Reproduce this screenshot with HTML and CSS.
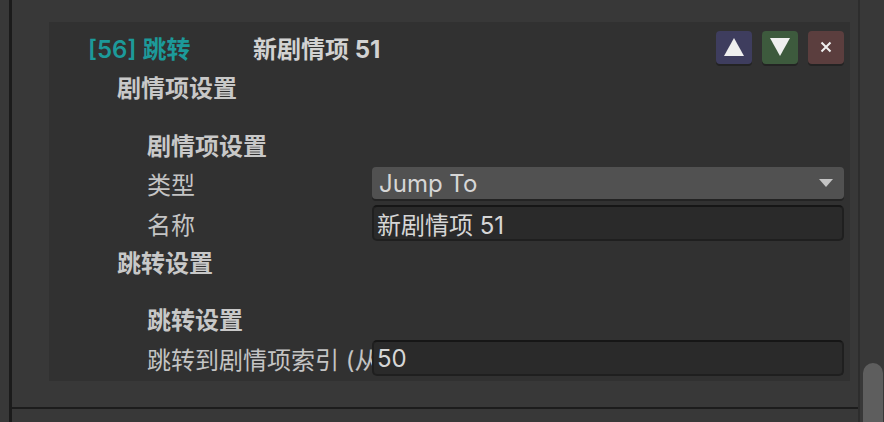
FILE: index.html
```html
<!DOCTYPE html>
<html lang="zh">
<head>
<meta charset="utf-8">
<link rel="stylesheet" href="styles.css">
</head>
<body>
  <div class="gutter"></div>
  <div class="vline"></div>
  <div class="main">
    <div class="content">
      <div class="panel">
        <div class="header">
          <span class="index">[56] 跳转</span>
          <span class="title">新剧情项 51</span>
          <div class="buttons">
            <button class="btn btn-up" aria-label="上移">
              <svg width="20" height="18" viewBox="0 0 20 18"><polygon points="10,0 20,18 0,18" fill="#efefef"/></svg>
            </button>
            <button class="btn btn-down" aria-label="下移">
              <svg width="20" height="18" viewBox="0 0 20 18"><polygon points="0,0 20,0 10,18" fill="#efefef"/></svg>
            </button>
            <button class="btn btn-close" aria-label="删除">
              <svg width="12" height="12" viewBox="0 0 12 12"><path d="M1.5 1.5 L10.5 10.5 M10.5 1.5 L1.5 10.5" stroke="#efefef" stroke-width="2"/></svg>
            </button>
          </div>
        </div>

        <div class="section-title">剧情项设置</div>
        <div class="group group-first">
          <div class="group-title">剧情项设置</div>
          <div class="row row-dropdown">
            <div class="label">类型</div>
            <div class="dropdown">
              <span>Jump To</span>
              <svg width="14" height="8" viewBox="0 0 14 8"><polygon points="0,0 14,0 7,8" fill="#c4c4c4"/></svg>
            </div>
          </div>
          <div class="row row-field">
            <div class="label">名称</div>
            <div class="field">新剧情项 51</div>
          </div>
        </div>

        <div class="section-title section-second">跳转设置</div>
        <div class="group group-second">
          <div class="group-title">跳转设置</div>
          <div class="row row-last">
            <div class="label">跳转到剧情项索引 (从</div>
            <div class="field">50</div>
          </div>
        </div>
      </div>
    </div>
    <div class="divider"></div>
  </div>
  <div class="sep"></div>
  <div class="scroll">
    <div class="thumb"></div>
  </div>
</body>
</html>
```

FILE: styles.css
```css
html, body {
  margin: 0;
  padding: 0;
}

body {
  width: 884px;
  height: 422px;
  overflow: hidden;
  display: flex;
  background: #383838;
  font-family: Inter, "Noto Sans CJK SC", sans-serif;
  font-size: 24px;
  color: #c4c4c4;
}

.gutter {
  width: 9px;
  flex: none;
}

.vline {
  width: 3px;
  flex: none;
  background: #1b1b1b;
}

.main {
  width: 846px;
  flex: none;
  display: flex;
  flex-direction: column;
}

.content {
  padding: 22px 8px 0 37px;
}

.panel {
  width: 801px;
  background: #313131;
  padding: 8px 6px 5px 0;
  box-sizing: border-box;
  display: flex;
  flex-direction: column;
}

.header {
  height: 34px;
  display: flex;
  align-items: center;
}

.index {
  width: 165px;
  padding-left: 39px;
  color: #1c9a9a;
  font-weight: 600;
  white-space: nowrap;
}

.title {
  color: #d2d2d2;
  font-weight: 700;
  white-space: nowrap;
}

.buttons {
  margin-left: auto;
  display: flex;
  gap: 10px;
}

.btn {
  width: 36px;
  height: 33px;
  border: none;
  border-radius: 4px;
  padding: 0;
  display: flex;
  align-items: center;
  justify-content: center;
  box-shadow: 0 2px 0 #232323;
}

.btn-up { background: #3e3d5e; }
.btn-down { background: #3d5a3d; }
.btn-close { background: #5b3e3e; }

.section-title {
  margin-top: 6px;
  height: 38px;
  line-height: 38px;
  padding-left: 68px;
  font-weight: 700;
  color: #c8c8c8;
}

.section-second {
  margin-top: 3px;
}

.group {
  padding-left: 98px;
  display: flex;
  flex-direction: column;
}

.group-first { margin-top: 20px; }
.group-second { margin-top: 20px; }

.group-title {
  height: 38px;
  line-height: 38px;
  font-weight: 700;
  color: #c8c8c8;
}

.group-second .group-title {
  height: 36px;
  line-height: 36px;
}

.row {
  display: flex;
  align-items: center;
}

.row-dropdown { height: 34px; }
.row-field { height: 38px; margin-top: 4px; }
.row-last { height: 36px; margin-top: 1px; }

.label {
  width: 225px;
  flex: none;
  white-space: nowrap;
  overflow: hidden;
}

.dropdown {
  flex: 1;
  height: 32px;
  box-sizing: border-box;
  background: #515151;
  border-radius: 4px;
  box-shadow: 0 2px 0 #232323;
  padding: 0 11px 0 7px;
  display: flex;
  align-items: center;
  justify-content: space-between;
  color: #d6d6d6;
}

.field {
  flex: 1;
  height: 36px;
  box-sizing: border-box;
  background: #2a2a2a;
  border: 2px solid #1f1f1f;
  border-top-color: #161616;
  border-radius: 5px;
  padding: 0 3px;
  display: flex;
  align-items: center;
  color: #d6d6d6;
  white-space: nowrap;
}

.divider {
  margin-top: 26px;
  height: 2px;
  background: #1c1c1c;
}

.sep {
  width: 2px;
  flex: none;
  background: #2d2d2d;
}

.scroll {
  flex: 1;
  padding-top: 363px;
  display: flex;
  flex-direction: column;
}

.thumb {
  margin-left: 3px;
  width: 20px;
  flex: 1;
  background: #5e5e5e;
  border-radius: 10px 10px 0 0;
}
```
